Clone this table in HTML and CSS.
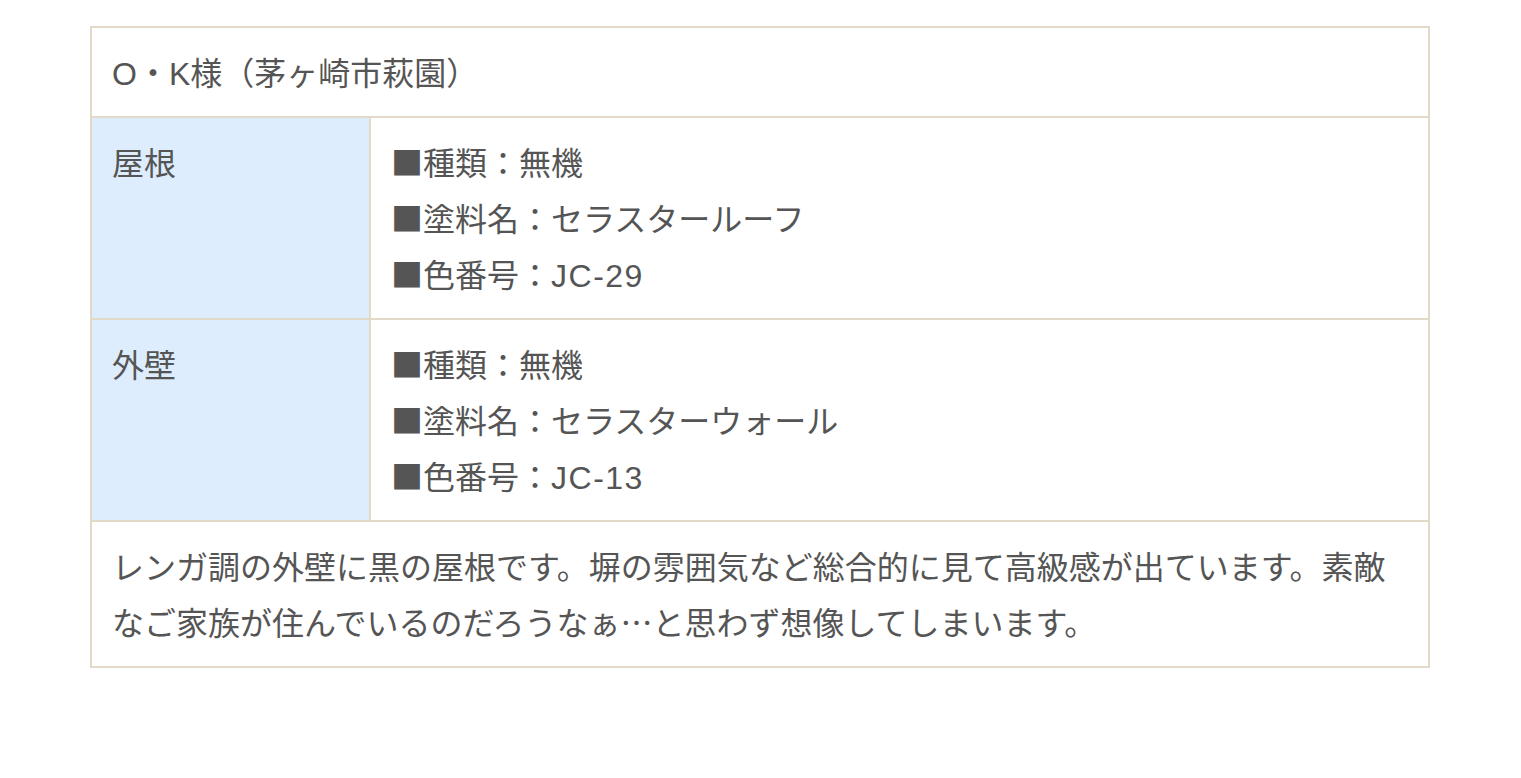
FILE: index.html
```html
<!DOCTYPE html>
<html lang="ja">
<head>
<meta charset="utf-8">
<link rel="stylesheet" href="styles.css">
</head>
<body>
<div class="page">
  <table class="spec">
    <colgroup><col class="col-head"><col></colgroup>
    <tr><td colspan="2" class="title"><span class="latin">O</span>・<span class="latin">K</span>様（茅ヶ崎市萩園）</td></tr>
    <tr>
      <th>屋根</th>
      <td>■種類：無機<br>■塗料名：セラスタールーフ<br>■色番号：<span class="latin code">JC-29</span></td>
    </tr>
    <tr>
      <th>外壁</th>
      <td>■種類：無機<br>■塗料名：セラスターウォール<br>■色番号：<span class="latin code">JC-13</span></td>
    </tr>
    <tr><td colspan="2" class="note">レンガ調の外壁に黒の屋根です。塀の雰囲気など総合的に見て高級感が出ています。素敵なご家族が住んでいるのだろうなぁ…と思わず想像してしまいます。</td></tr>
  </table>
</div>
</body>
</html>
```

FILE: styles.css
```css
html, body {
  margin: 0;
  padding: 0;
  background: #fff;
}
.page {
  padding: 26px 91px 0 90px;
}
.spec {
  width: 1340px;
  border-collapse: collapse;
  table-layout: fixed;
  font-family: "Noto Sans CJK JP", "Noto Sans", sans-serif;
  font-size: 32px;
  line-height: 56px;
  color: #555;
}
.col-head {
  width: 279px;
}
.spec th,
.spec td {
  border: 2px solid #e2d9c9;
  padding: 15px 20px 17px;
  text-align: left;
  vertical-align: top;
  font-weight: normal;
}
.spec th {
  background: #deedfe;
}
.latin {
  font-family: "Liberation Sans", "Noto Sans CJK JP", sans-serif;
  line-height: 0;
}
.code {
  letter-spacing: 1.5px;
}
```
